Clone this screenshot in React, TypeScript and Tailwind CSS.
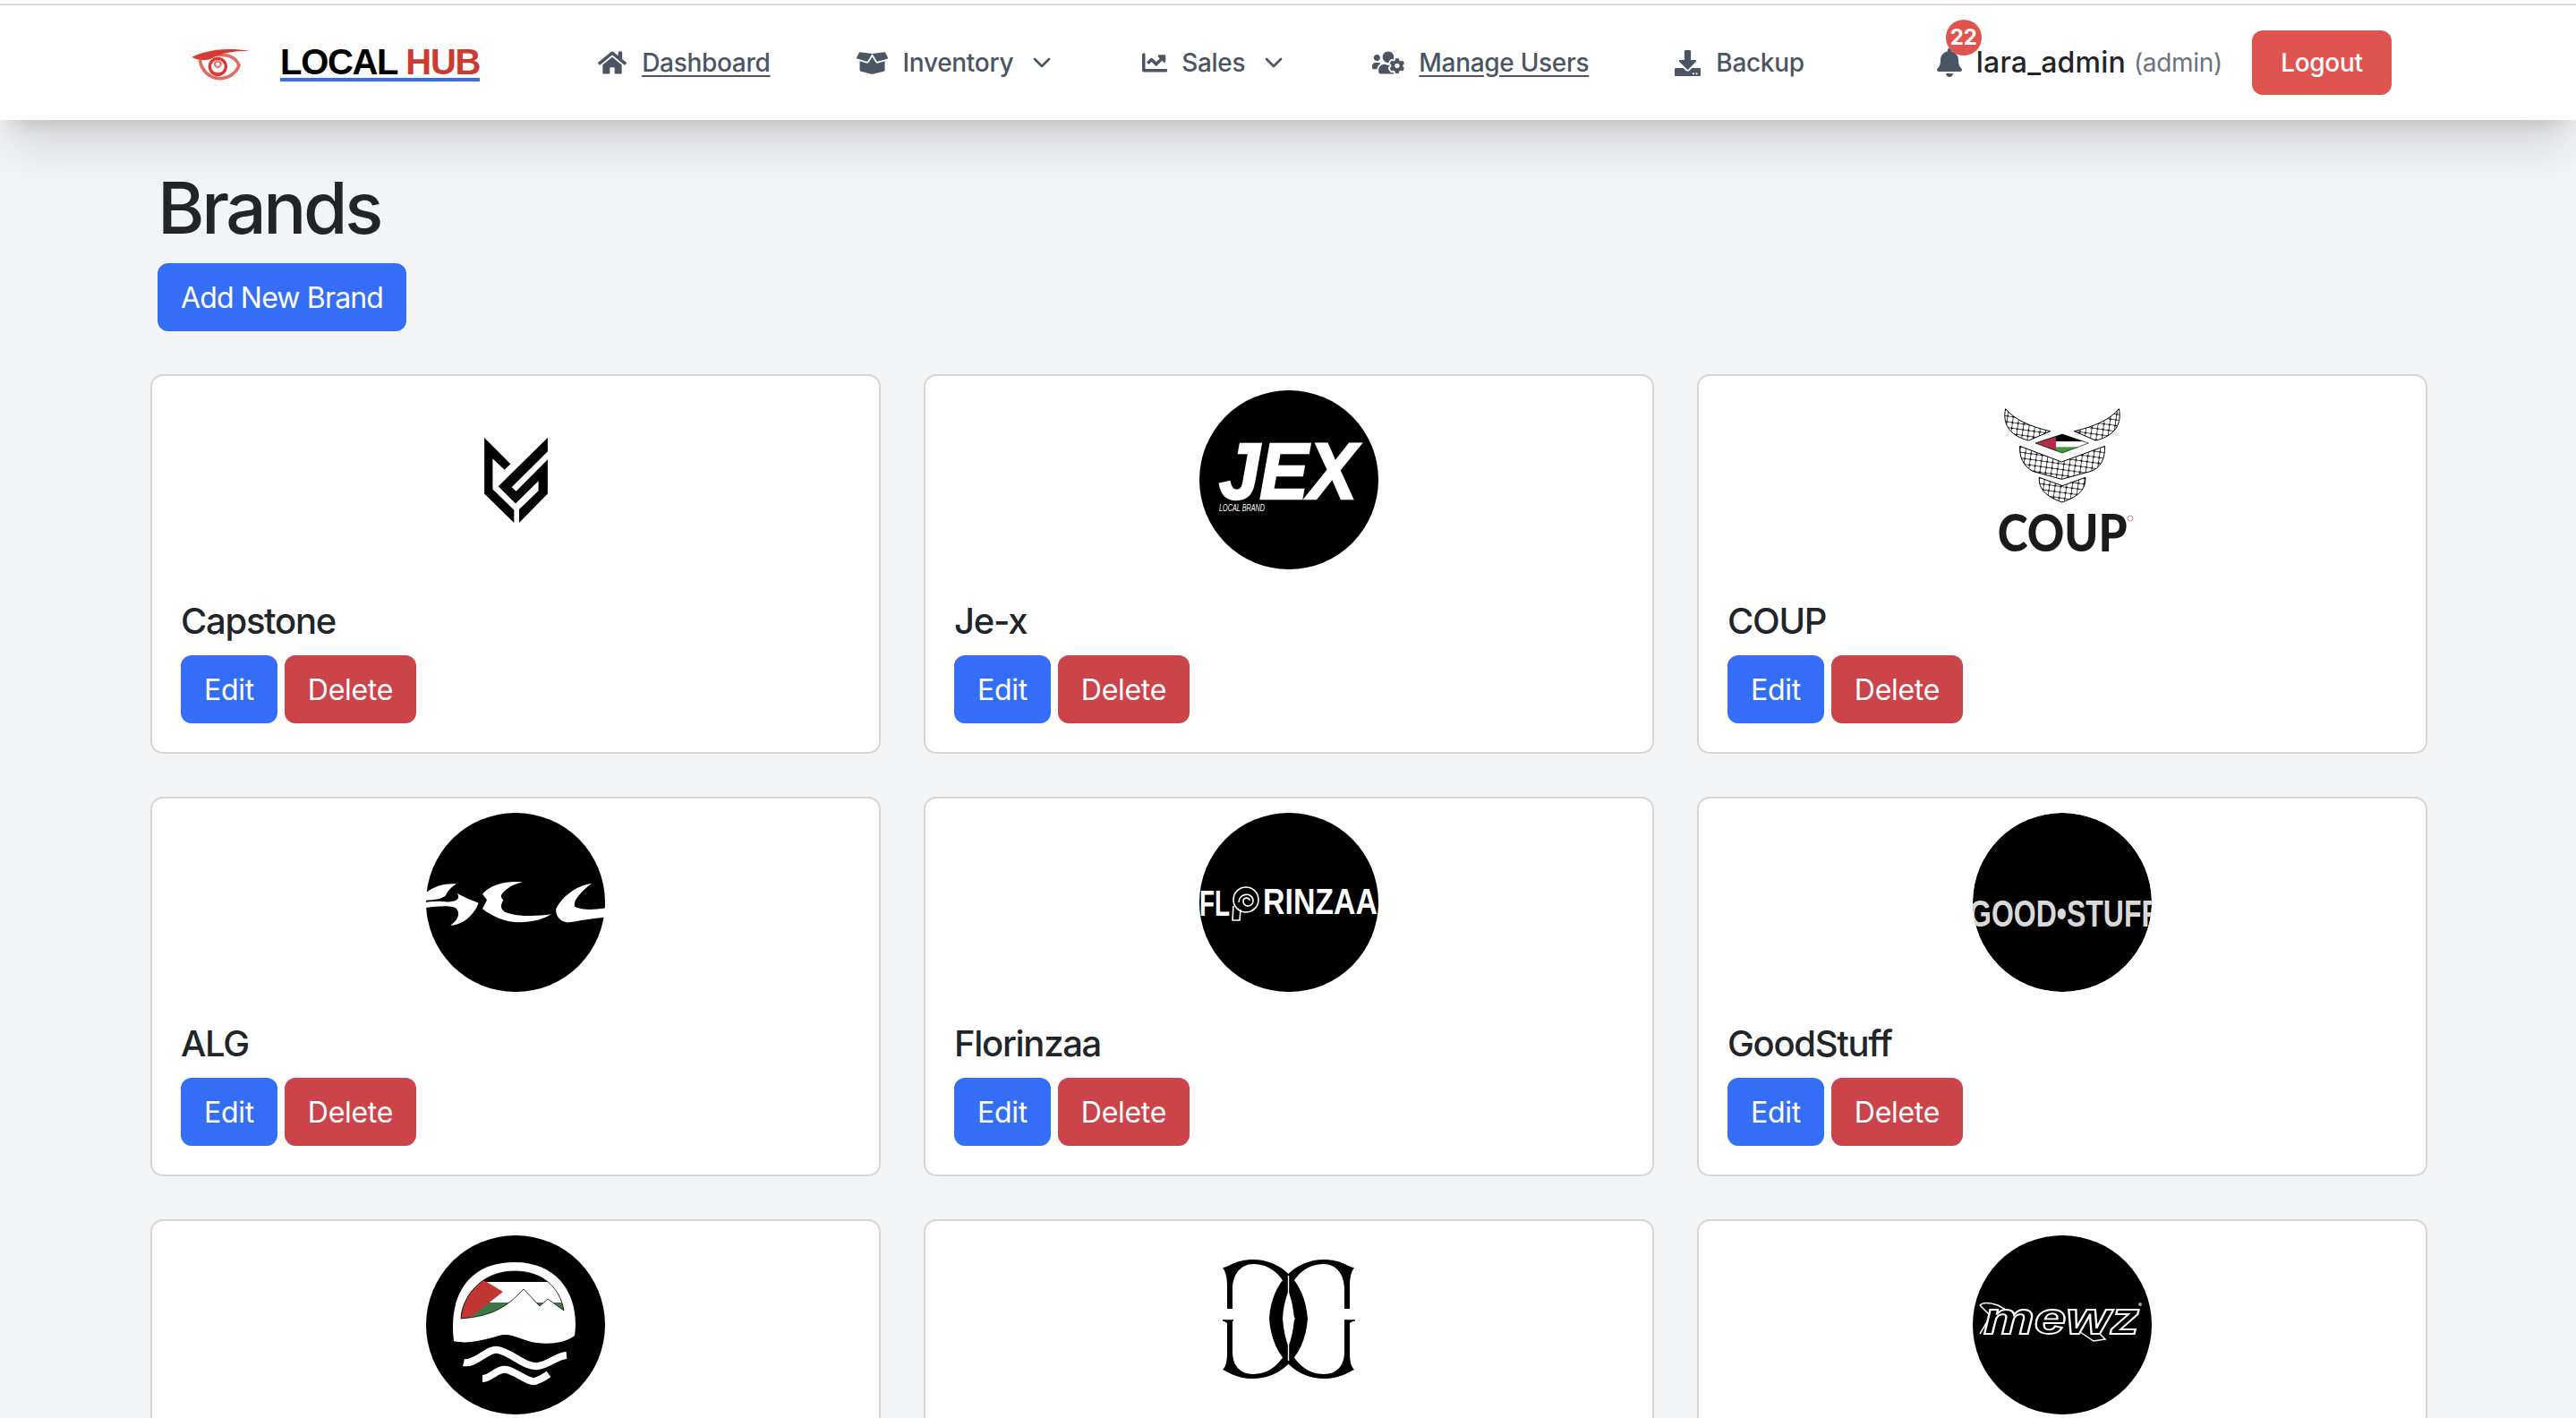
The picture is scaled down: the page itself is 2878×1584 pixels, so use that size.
import React from "react";
import { FaBell, FaBoxOpen, FaChartLine, FaDownload, FaHome, FaUsersCog } from "react-icons/fa";
import { ChevronDown } from "lucide-react";

const EyeLogo = () => (
  <svg viewBox="0 0 255 150" className="w-[85px] h-[50px] shrink-0" fill="none">
    <path d="M28 56 C60 40 130 20 222 36 C160 34 120 46 92 62 C70 70 45 66 28 56 Z" fill="#d63a32" />
    <path d="M55 66 C60 100 85 128 125 128 C155 126 178 108 186 84 C178 60 150 44 110 50" stroke="#d63a32" strokeWidth="11" strokeOpacity="0.75" />
    <circle cx="115" cy="88" r="27" stroke="#d63a32" strokeWidth="10" />
    <circle cx="115" cy="80" r="10" stroke="#d63a32" strokeWidth="7" strokeOpacity="0.7" />
    <path d="M92 100 C100 114 130 114 142 100" stroke="#d63a32" strokeWidth="6" strokeOpacity="0.6" />
  </svg>
);

const CapstoneLogo = () => (
  <svg viewBox="30 27 213 286" className="w-[71px] h-[95px]" fill="#000">
    <polygon points="30,27 118,115 98,135 58,97 58,200 130,270 130,313 30,215" />
    <polygon points="243,27 243,73 122,193 137,207 243,100 243,215 147,313 147,268 212,205 212,172 135,248 77,190" />
  </svg>
);

const JexLogo = () => (
  <svg viewBox="0 0 200 200" className="w-[200px] h-[200px]">
    <circle cx="100" cy="100" r="100" fill="#000" />
    <text x="22" y="121" fill="#fff" stroke="#fff" strokeWidth="2.5" fontFamily="Liberation Sans, sans-serif" fontWeight="700" fontStyle="italic" fontSize="89" textLength="154" lengthAdjust="spacingAndGlyphs">JEX</text>
    <text x="22" y="135" fill="#fff" fontFamily="Liberation Sans, sans-serif" fontStyle="italic" fontSize="11" textLength="51" lengthAdjust="spacingAndGlyphs">LOCAL BRAND</text>
  </svg>
);

const CoupLogo = () => (
  <svg viewBox="12 18 600 600" className="w-[200px] h-[200px]">
    <defs>
      <pattern id="keffiyeh" width="19" height="19" patternUnits="userSpaceOnUse" patternTransform="rotate(8)">
        <rect width="19" height="19" fill="#fff" />
        <path d="M0 9.5H19M9.5 0V19" stroke="#000" strokeWidth="2" />
        <circle cx="9.5" cy="9.5" r="3.4" fill="#000" />
      </pattern>
      <clipPath id="flag">
        <polygon points="222,195 312,165 400,195 312,228" />
      </clipPath>
    </defs>
    <g fill="url(#keffiyeh)" stroke="#000" strokeWidth="3">
      <path d="M122 80 C112 125 130 170 200 186 L272 155 C205 140 150 115 122 80 Z" />
      <path d="M502 80 C512 125 494 170 424 186 L352 155 C419 140 474 115 502 80 Z" />
      <path d="M170 205 L310 258 L455 205 C455 250 440 280 405 290 L310 316 L215 290 C180 272 168 240 170 205 Z" />
      <path d="M235 310 L312 338 L390 310 C390 350 370 372 312 393 C260 375 232 350 235 310 Z" />
    </g>
    <g clipPath="url(#flag)">
      <rect x="220" y="160" width="185" height="30" fill="#000" />
      <rect x="220" y="190" width="185" height="18" fill="#fff" />
      <rect x="220" y="208" width="185" height="22" fill="#3f9a3c" />
      <polygon points="220,195 290,170 292,222 300,235 220,235" fill="#b52c45" />
    </g>
    <polygon points="222,195 312,165 400,195 312,228" fill="none" stroke="#000" strokeWidth="2" />
    <text x="95" y="558" fill="#1a1a1a" fontFamily="Lato, sans-serif" fontWeight="900" fontSize="172" textLength="435" lengthAdjust="spacingAndGlyphs">COUP</text>
    <circle cx="540" cy="447" r="9" fill="none" stroke="#d8889a" strokeWidth="3" />
  </svg>
);

const AlgLogo = () => (
  <svg viewBox="46 53 600 600" className="w-[200px] h-[200px]">
    <circle cx="346" cy="353" r="300" fill="#000" />
    <g fill="#fff">
      <path d="M148 291 C110 288 70 298 40 325 L46 346 C80 346 100 340 112 330 C116 318 130 302 148 291 Z" />
      <path d="M40 372 C80 366 125 362 145 372 C165 390 150 415 128 430 C165 430 205 400 222 355 C200 345 170 335 150 322 C165 345 140 355 100 350 C80 348 60 352 40 352 Z" />
      <path d="M370 285 C320 280 265 290 235 325 L250 345 L235 375 C265 398 310 420 360 420 C400 420 445 408 465 393 C420 400 350 402 310 385 C290 372 300 355 305 345 C295 335 292 328 318 308 C332 296 350 290 370 285 Z" />
      <path d="M600 290 C550 296 500 335 482 375 C478 400 500 422 525 420 C560 415 610 405 650 403 L650 372 C610 378 570 380 545 368 C535 350 565 318 600 290 Z" />
    </g>
  </svg>
);

const FlorinzaaLogo = () => (
  <svg viewBox="0 0 200 200" className="w-[200px] h-[200px] overflow-hidden">
    <circle cx="100" cy="100" r="100" fill="#000" />
    <g fill="#fff" fontFamily="Liberation Sans, sans-serif" fontWeight="700" fontSize="40">
      <text x="0" y="115" textLength="34" lengthAdjust="spacingAndGlyphs">FL</text>
      <text x="71" y="113" textLength="128" lengthAdjust="spacingAndGlyphs">RINZAA</text>
    </g>
    <g fill="none" stroke="#fff" strokeWidth="1.6">
      <circle cx="52" cy="97" r="14" />
      <path d="M44 100 C44 90 58 88 60 97 C61 106 49 106 49 99 C49 94 56 94 56 98" />
      <path d="M38 104 L37 120 L45 120 L46 108" />
    </g>
  </svg>
);

const GoodStuffLogo = () => (
  <svg viewBox="0 0 200 200" className="w-[200px] h-[200px] rounded-full">
    <circle cx="100" cy="100" r="100" fill="#000" />
    <text x="-4" y="127" fill="#d9d9d9" fontFamily="Liberation Sans, sans-serif" fontWeight="700" fontSize="42" textLength="212" lengthAdjust="spacingAndGlyphs">GOOD•STUFF</text>
  </svg>
);

const MountainLogo = () => (
  <svg viewBox="0 0 200 200" className="w-[200px] h-[200px]">
    <defs>
      <clipPath id="peak">
        <path d="M39 93 C40 70 60 40 99 40 C132 40 150 60 154 84 L136 71 L127 79 L109 60 C90 80 75 90 39 93 Z" />
      </clipPath>
    </defs>
    <circle cx="100" cy="100" r="100" fill="#000" />
    <path d="M31 118 C25 70 45 30 99 30 C150 30 172 70 166 112 C155 120 140 122 123 120 C105 117 95 108 81 112 C65 117 45 122 31 118 Z" fill="#fff" />
    <g clipPath="url(#peak)">
      <rect x="30" y="35" width="130" height="17" fill="#000" />
      <rect x="30" y="52" width="130" height="23" fill="#fff" />
      <rect x="30" y="75" width="130" height="25" fill="#3b7a46" />
      <polygon points="66,51 86,63 39,100 30,100 30,45" fill="#c23631" />
    </g>
    <path d="M39 93 C40 70 60 40 99 40 C132 40 150 60 154 84 L136 71 L127 79 L109 60 C90 80 75 90 39 93 Z" fill="none" stroke="#000" strokeWidth="0.8" />
    <g fill="none" stroke="#fff" strokeWidth="8">
      <path d="M42 142 C55 145 70 125 80 128 C95 130 110 148 125 146 C138 144 145 135 157 134" />
      <path d="M63 160 C72 160 80 148 90 150 C100 152 115 165 122 163 C130 160 133 158 137 155" />
    </g>
  </svg>
);

const MonogramLogo = () => (
  <svg viewBox="0 0 200 200" className="w-[200px] h-[200px]">
    <g fill="#000" fillRule="evenodd">
      <path d="M26 36 C32 36 40 27 60 27 C90 27 118 50 121 93 C118 136 90 160 60 160 C40 160 32 152 26 150 C30 146 31 140 31 130 L31 98 L26 95 L26 92 L31 88 L31 58 C31 48 30 42 26 36 Z M37 60 L37 130 C37 146 46 155 60 155 C84 155 103 134 106 93 C103 52 84 32 60 32 C46 32 37 44 37 60 Z" />
      <path d="M173 36 C167 36 159 27 139 27 C109 27 81 50 78 93 C81 136 109 160 139 160 C159 160 167 152 173 150 C169 146 168 140 168 130 L168 98 L173 95 L173 92 L168 88 L168 58 C168 48 169 42 173 36 Z M162 60 L162 130 C162 146 153 155 139 155 C115 155 96 134 93 93 C96 52 115 32 139 32 C153 32 162 44 162 60 Z" />
    </g>
    <rect x="22" y="82" width="18" height="13" fill="#fff" />
    <rect x="160" y="82" width="18" height="13" fill="#fff" />
    <path d="M26 95 H38 M162 95 H174" stroke="#000" strokeWidth="1.5" />
    <path d="M100 82 L107 93 L100 106 L93 93 Z" fill="#fff" />
    <path d="M99.5 45 L99.5 82 M99.5 106 L99.5 140" stroke="#fff" strokeWidth="1.4" />
  </svg>
);

const MewzLogo = () => (
  <svg viewBox="0 0 200 200" className="w-[200px] h-[200px]">
    <circle cx="100" cy="100" r="100" fill="#000" />
    <path d="M8 78 C12 74 22 76 28 78 L46 88 M8 78 L20 90 L8 110 M120 108 L135 118 L148 116 L140 108" fill="none" stroke="#fff" strokeWidth="1.5" />
    <text x="12" y="110" fill="#000" stroke="#fff" strokeWidth="1.8" fontFamily="Liberation Sans, sans-serif" fontWeight="700" fontStyle="italic" fontSize="50" textLength="174" lengthAdjust="spacingAndGlyphs">mewz</text>
    <circle cx="187" cy="77" r="2" fill="#9ca3af" />
  </svg>
);

const brands = [
  { id: 1, name: "Capstone", logo: <CapstoneLogo /> },
  { id: 2, name: "Je-x", logo: <JexLogo /> },
  { id: 3, name: "COUP", logo: <CoupLogo /> },
  { id: 4, name: "ALG", logo: <AlgLogo /> },
  { id: 5, name: "Florinzaa", logo: <FlorinzaaLogo /> },
  { id: 6, name: "GoodStuff", logo: <GoodStuffLogo /> },
  { id: 7, name: "", logo: <MountainLogo /> },
  { id: 8, name: "", logo: <MonogramLogo /> },
  { id: 9, name: "", logo: <MewzLogo /> },
];

const BrandCard = ({ name, logo }: { name: string; logo: React.ReactNode }) => (
  <div className="bg-white border-2 border-[#d4d5d7] rounded-[14px] pt-4">
    <div className="h-[200px] flex items-center justify-center">{logo}</div>
    <div className="p-8">
      <h5 className="pt-0.5 text-[40px] leading-[48px] font-medium tracking-[-1.3px] text-[#212529] mb-[14px] min-h-[50px]">{name}</h5>
      <div className="flex gap-2">
        <button className="h-[76px] pt-0.5 px-[26px] rounded-xl bg-[#356ef6] text-white text-[32px] tracking-[-0.3px]">Edit</button>
        <button className="h-[76px] pt-0.5 px-[26px] rounded-xl bg-[#cb444a] text-white text-[32px] tracking-[-0.3px]">Delete</button>
      </div>
    </div>
  </div>
);

const App = () => {
  return (
    <div className="h-screen overflow-hidden bg-[#f3f4f6] font-['Inter',sans-serif]">
      <div className="h-1 bg-white" />
      <nav className="relative z-10 h-[130px] bg-white border-t-2 border-[#dcdcdc] flex items-center pl-[205px] shadow-[0_40px_50px_-10px_rgba(0,0,0,0.12),0_16px_20px_-12px_rgba(0,0,0,0.12)] text-[28px] font-medium tracking-[-0.3px] text-[#4b5563]">
        <EyeLogo />
        <a className="ml-[23px] pt-0.5 border-b-4 border-[#356ef6] text-[40px] leading-[36px] font-bold tracking-[-1.3px] font-['Liberation_Sans',sans-serif] text-black">
          LOCAL <span className="text-[#cc3a30]">HUB</span>
        </a>
        <a className="ml-[132px] flex items-center gap-[17px]">
          <FaHome className="text-[32px]" />
          <span className="underline underline-offset-4">Dashboard</span>
        </a>
        <a className="ml-[97px] flex items-center gap-4">
          <FaBoxOpen className="text-[35px]" />
          <span>Inventory</span>
          <ChevronDown className="w-8 h-8" />
        </a>
        <a className="ml-[96px] flex items-center gap-4">
          <FaChartLine className="text-[28px]" />
          <span>Sales</span>
          <ChevronDown className="w-8 h-8" />
        </a>
        <a className="ml-[94px] flex items-center gap-4">
          <FaUsersCog className="text-[36px]" />
          <span className="underline underline-offset-4">Manage Users</span>
        </a>
        <a className="ml-[96px] flex items-center gap-[17px]">
          <FaDownload className="text-[29px]" />
          <span>Backup</span>
        </a>
        <div className="relative ml-[146px]">
          <FaBell className="text-[32px]" />
          <span className="absolute left-3 top-[-32px] w-10 h-10 rounded-full bg-[#e0544f] text-white text-2xl font-bold tracking-normal flex items-center justify-center">22</span>
        </div>
        <span className="ml-[14px] text-[32px] tracking-[0.2px] text-[#212529]">lara_admin</span>
        <span className="ml-[9px] font-normal text-[#6b7280]">(admin)</span>
        <button className="ml-[33px] w-[156px] h-[72px] rounded-xl bg-[#e0544f] text-white">Logout</button>
      </nav>

      <main className="pl-[168px] pr-[166px] pt-12">
        <h1 className="ml-2 pt-0.5 text-[80px] leading-[96px] font-medium tracking-[-3.4px] text-[#212529] mb-[14px]">Brands</h1>
        <button className="ml-2 h-[76px] pt-0.5 px-[26px] rounded-xl bg-[#356ef6] text-white text-[32px] tracking-[-0.85px] mb-12">Add New Brand</button>
        <div className="grid grid-cols-3 gap-12">
          {brands.map((b) => (
            <BrandCard key={b.id} name={b.name} logo={b.logo} />
          ))}
        </div>
      </main>
    </div>
  );
};

export default App;
